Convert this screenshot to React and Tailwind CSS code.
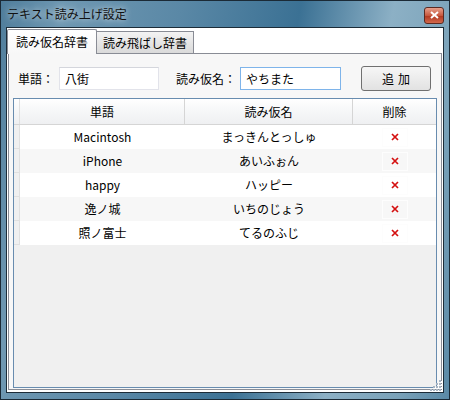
import React, { useState } from "react";

const rows = [
  { word: "Macintosh", kana: "まっきんとっしゅ" },
  { word: "iPhone", kana: "あいふぉん" },
  { word: "happy", kana: "ハッピー" },
  { word: "逸ノ城", kana: "いちのじょう" },
  { word: "照ノ富士", kana: "てるのふじ" },
];

function DeleteMark() {
  return (
    <svg width="8" height="8" viewBox="0 0 8 8">
      <path d="M1 1 L7 7 M7 1 L1 7" stroke="#d41010" strokeWidth="1.7" />
    </svg>
  );
}

function SizeGrip() {
  // little dotted triangle in the bottom right corner
  const dots = [
    [9, 1], [6, 4], [9, 4], [3, 7], [6, 7], [9, 7], [0, 10], [3, 10], [6, 10], [9, 10],
  ];
  return (
    <svg width="12" height="12" viewBox="0 0 12 12">
      {dots.map(([x, y], i) => (
        <g key={i}>
          <rect x={x + 1} y={y + 1} width="2" height="2" fill="#ffffff" />
          <rect x={x} y={y} width="2" height="2" fill="#a9b6c4" />
        </g>
      ))}
    </svg>
  );
}

export default function App() {
  const [tab, setTab] = useState(0);
  const [word, setWord] = useState("八街");
  const [kana, setKana] = useState("やちまた");

  return (
    <div
      className="w-[450px] h-[400px] flex flex-col border border-[#1b2a36] bg-[linear-gradient(100deg,#4f7d9b_0%,#6f98b2_12%,#5a88a6_35%,#3b7194_58%,#8cb0c5_76%,#7aa2b9_90%,#5a89a6_100%)] text-[12px] text-black"
      style={{ fontFamily: '"Noto Sans CJK JP", "Noto Sans", sans-serif' }}
    >
      {/* Title bar */}
      <div className="h-[26px] flex items-center pl-[6px] pr-[5px] relative">
        <span className="text-[12px] text-[#111] leading-none [text-shadow:0_0_6px_rgba(255,255,255,0.9)]">
          テキスト読み上げ設定
        </span>
        <div className="ml-auto mt-[2px] w-[20px] h-[17px] rounded-[3px] border border-[#5a2a22] bg-[linear-gradient(#e8a08c,#c7593f_50%,#b13a22_55%,#d2684c)] flex items-center justify-center">
          <svg width="9" height="8" viewBox="0 0 9 8">
            <path d="M1 1 L8 7 M8 1 L1 7" stroke="#ffffff" strokeWidth="2" />
          </svg>
        </div>
      </div>

      {/* Client area */}
      <div className="flex-1 mx-[5px] mb-[6px] border border-[#1c2c38] bg-white flex flex-col relative">
        {/* Tabs */}
        <div className="h-[25px] flex items-end">
          <button
            onClick={() => setTab(0)}
            className={
              tab === 0
                ? "h-[25px] w-[90px] -mb-px z-10 border border-b-0 border-[#898c95] bg-[linear-gradient(#ffffff,#f7f7f7)] rounded-t-[2px] flex items-start justify-center pt-[3px]"
                : "h-[22px] w-[90px] ml-px border border-b-0 border-[#898c95] bg-[linear-gradient(#f2f2f2,#dadada)] flex items-start justify-center pt-[2px]"
            }
          >
            読み仮名辞書
          </button>
          <button
            onClick={() => setTab(1)}
            className={
              tab === 1
                ? "h-[25px] w-[97px] -mb-px z-10 border border-b-0 border-[#898c95] bg-[linear-gradient(#ffffff,#f7f7f7)] rounded-t-[2px] flex items-start justify-center pt-[3px]"
                : "h-[22px] w-[97px] border border-b-0 border-l-0 border-[#898c95] bg-[linear-gradient(#f3f3f3,#e6e6e6_50%,#dadada)] flex items-start justify-center pt-[2px]"
            }
          >
            読み飛ばし辞書
          </button>
        </div>

        {/* Tab panel */}
        <div className="flex-1 mx-px mb-[2px] border border-[#898c95] bg-[#f7f7f7] flex flex-col pb-px">
          {/* Form row */}
          <div className="h-[25px] mt-[12px] flex items-center pl-[9px]">
            <span className="w-[36px]">単語：</span>
            <input
              value={word}
              onChange={(e) => setWord(e.target.value)}
              className="ml-[5px] w-[100px] h-[23px] bg-white border border-[#e2e3ea] border-t-[#d4d6dc] px-[5px] outline-none"
            />
            <span className="ml-[17px] w-[60px]">読み仮名：</span>
            <input
              value={kana}
              onChange={(e) => setKana(e.target.value)}
              className="ml-[4px] w-[101px] h-[23px] bg-white border border-[#7eb4ea] px-[5px] outline-none"
            />
            <button className="ml-[20px] w-[70px] h-[25px] rounded-[3px] border border-[#707070] bg-[linear-gradient(#f6f6f6,#ececec_50%,#e2e2e2)] flex items-center justify-center gap-[4px]">
              <span>追</span>
              <span>加</span>
            </button>
          </div>

          {/* Data grid */}
          <div className="flex-1 mt-[7px] mx-[4px] border border-[#688caf] bg-[#f0f0f0] flex flex-col">
            {/* header */}
            <div className="h-[26px] flex border-b border-[#d5d5d5] bg-[linear-gradient(#ffffff,#f7f8f9_40%,#eff0f2)]">
              <div className="w-[6px] border-r border-[#e0e0e0]" />
              <div className="w-[165px] flex items-center justify-center border-r border-[#d5d5d5]">単語</div>
              <div className="w-[168px] flex items-center justify-center border-r border-[#d5d5d5]">読み仮名</div>
              <div className="flex-1 flex items-center justify-center">削除</div>
            </div>
            {rows.map((r, i) => (
              <div key={i} className="h-[24px] flex">
                <div className="w-[6px] bg-[#f0f0f0] border-r border-b border-[#e0e0e0]" />
                <div className={i % 2 === 0 ? "flex-1 flex bg-white" : "flex-1 flex bg-[#f7f7f7]"}>
                  <div className="w-[165px] flex items-center justify-center">{r.word}</div>
                  <div className="w-[168px] flex items-center justify-center">{r.kana}</div>
                  <div className="flex-1 flex items-center justify-center">
                    <div className="w-[26px] h-[19px] border border-[#fdfdfd] flex items-center justify-center">
                      <DeleteMark />
                    </div>
                  </div>
                </div>
              </div>
            ))}
          </div>
        </div>

        <div className="absolute right-[1px] bottom-[1px]">
          <SizeGrip />
        </div>
      </div>
    </div>
  );
}
